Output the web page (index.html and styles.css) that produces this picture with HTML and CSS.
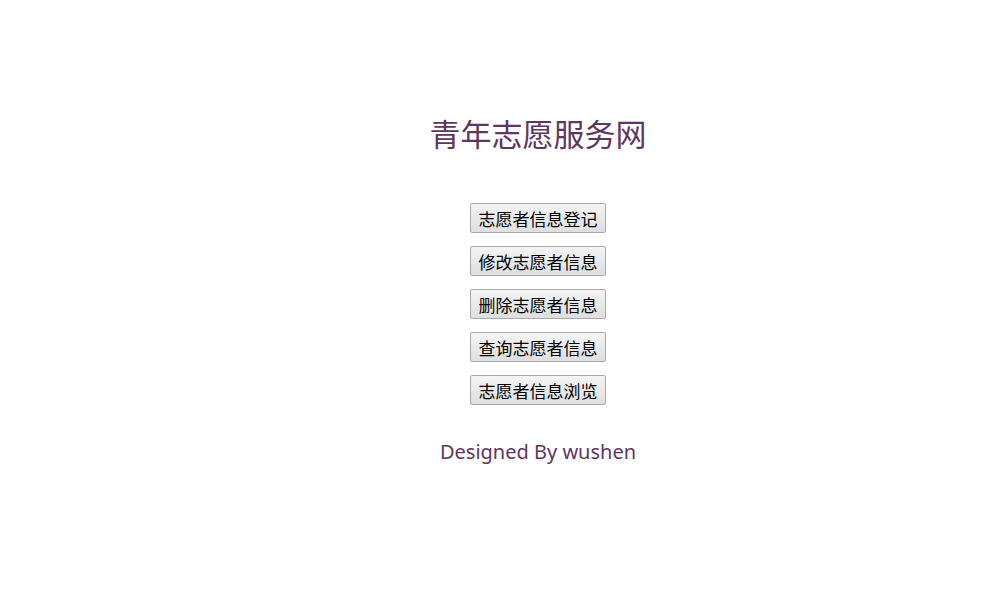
FILE: index.html
```html
<!DOCTYPE html>
<html lang="zh">
<head>
<meta charset="utf-8">
<title>青年志愿服务网</title>
<link rel="stylesheet" href="styles.css">
</head>
<body>
<div class="page">
  <h1 class="title">青年志愿服务网</h1>
  <div class="menu">
    <button class="btn">志愿者信息登记</button>
    <button class="btn">修改志愿者信息</button>
    <button class="btn">删除志愿者信息</button>
    <button class="btn">查询志愿者信息</button>
    <button class="btn">志愿者信息浏览</button>
  </div>
  <p class="footer">Designed By wushen</p>
</div>
</body>
</html>
```

FILE: styles.css
```css
html, body {
  margin: 0;
  padding: 0;
  background: #ffffff;
}
.page {
  display: flex;
  flex-direction: column;
  align-items: center;
  padding-left: 77px;
  padding-top: 112px;
  font-family: "Noto Sans", "Noto Sans CJK SC", sans-serif;
}
.title {
  margin: 0;
  font-weight: normal;
  font-size: 31px;
  line-height: 42px;
  color: #5e3660;
  font-family: "Noto Sans CJK SC", sans-serif;
}
.menu {
  display: flex;
  flex-direction: column;
  align-items: center;
  gap: 13px;
  margin-top: 49px;
}
.btn {
  width: 136px;
  height: 30px;
  padding: 0;
  font-family: "Noto Sans CJK SC", sans-serif;
  font-size: 17px;
  color: #000;
  background: linear-gradient(#f4f4f4, #dedede);
  border: 1px solid #a9a9a9;
  border-radius: 2px;
}
.footer {
  margin: 32px 0 0;
  font-size: 20px;
  line-height: 30px;
  color: #5e3660;
}
```
